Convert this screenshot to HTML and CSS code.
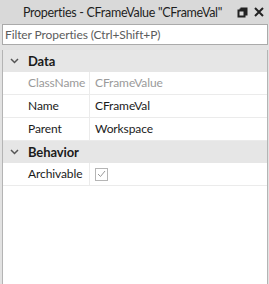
FILE: index.html
```html
<!DOCTYPE html>
<html lang="en">
<head>
    <meta charset="UTF-8" />
    <title>Properties</title>
    <link rel="stylesheet" href="styles.css">
</head>
<body>
    <div class="panel">
        <div class="titleBar">
            <span class="titleText">Properties - CFrameValue "CFrameVal"</span>
            <span class="titleIcons">
                <svg width="11" height="11" viewBox="0 0 11 11">
                    <path d="M3.5 1.5h6v6h-2M1.5 3.5h6v6h-6z M3.5 1.5v2" fill="none" stroke="#222" stroke-width="2"/>
                </svg>
                <svg width="10" height="10" viewBox="0 0 10 10">
                    <path d="M1 1l8 8M9 1l-8 8" stroke="#222" stroke-width="2"/>
                </svg>
            </span>
        </div>
        <div class="filter">Filter Properties (Ctrl+Shift+P)</div>

        <div class="props">
            <div class="group">
                <span class="chevron">
                    <svg width="9" height="6" viewBox="0 0 9 6"><path d="M1 1l3.5 3.5L8 1" fill="none" stroke="#555" stroke-width="1.5"/></svg>
                </span>
                Data
            </div>
            <div class="row readonly">
                <div class="name">ClassName</div>
                <div class="value">CFrameValue</div>
            </div>
            <div class="row">
                <div class="name">Name</div>
                <div class="value">CFrameVal</div>
            </div>
            <div class="row">
                <div class="name">Parent</div>
                <div class="value">Workspace</div>
            </div>
            <div class="group">
                <span class="chevron">
                    <svg width="9" height="6" viewBox="0 0 9 6"><path d="M1 1l3.5 3.5L8 1" fill="none" stroke="#555" stroke-width="1.5"/></svg>
                </span>
                Behavior
            </div>
            <div class="row">
                <div class="name">Archivable</div>
                <div class="value">
                    <span class="checkbox">
                        <svg width="9" height="8" viewBox="0 0 9 8"><path d="M1 4l2.5 2.5L8 1" fill="none" stroke="#999" stroke-width="1"/></svg>
                    </span>
                </div>
            </div>
        </div>
    </div>
</body>
</html>
```

FILE: styles.css
```css
html, body {
    height: 100%;
}

body {
    margin: 0;
    font-family: Lato, 'Open Sans', sans-serif;
    font-size: 12px;
    letter-spacing: -0.1px;
    color: #1b1b1b;
    background: #e2e2e2;
}

.panel {
    display: flex;
    flex-direction: column;
    height: 100%;
}

.titleBar {
    display: flex;
    align-items: center;
    height: 24px;
    background: #d9d9d9;
    padding: 0 5px 0 23px;
}

.titleText {
    flex: 1;
    white-space: nowrap;
    color: #1e1e1e;
    font-size: 12.5px;
    letter-spacing: -0.3px;
}

.titleIcons {
    display: flex;
    align-items: center;
    gap: 6px;
}

.filter {
    height: 19px;
    line-height: 19px;
    margin: 0 1px 0 2px;
    padding-left: 2px;
    background: #fff;
    border: 1px solid #aaa;
    color: #5c5c5c;
    white-space: nowrap;
}

.props {
    flex: 1;
    margin: 5px 1px 0 2px;
    background: #fff;
    border-left: 1px solid #b4b4b4;
    border-right: 1px solid #b4b4b4;
}

.group {
    display: flex;
    align-items: center;
    height: 22px;
    background: #e6e6e6;
    font-weight: bold;
    font-size: 13px;
    padding-left: 7px;
}

.chevron {
    display: flex;
    width: 18px;
}

.row {
    display: flex;
    height: 22px;
    border-bottom: 1px solid #ebebeb;
}

.name {
    width: 61px;
    padding-left: 25px;
    border-right: 1px solid #ebebeb;
    line-height: 22px;
    white-space: nowrap;
}

.value {
    padding-left: 5px;
    line-height: 22px;
    display: flex;
    align-items: center;
}

.readonly .name,
.readonly .value {
    color: #9a9a9a;
}

.checkbox {
    display: flex;
    align-items: center;
    justify-content: center;
    width: 11px;
    height: 11px;
    border: 1px solid #b5b5b5;
}
```
